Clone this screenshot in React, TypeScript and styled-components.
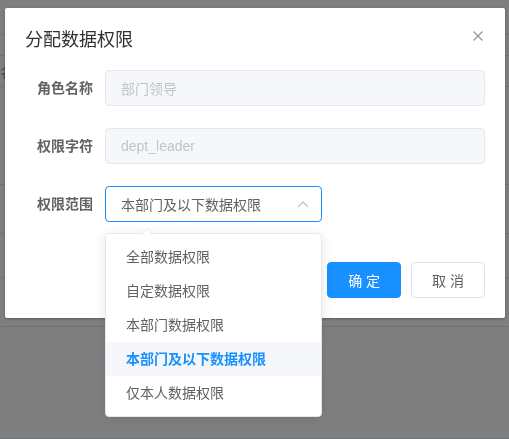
import { useState } from 'react';
import styled, { createGlobalStyle } from 'styled-components';

type ScopeOption = {
  value: string;
  label: string;
};

const SCOPE_OPTIONS: ScopeOption[] = [
  { value: '1', label: '全部数据权限' },
  { value: '2', label: '自定数据权限' },
  { value: '3', label: '本部门数据权限' },
  { value: '4', label: '本部门及以下数据权限' },
  { value: '5', label: '仅本人数据权限' },
];

// 背景列表的行高（被遮罩盖住的角色表格）
const TABLE_ROWS = [35, 21, 31, 98, 49, 44, 49, 112];

const GlobalStyle = createGlobalStyle`
  html, body {
    margin: 0;
    padding: 0;
    background: #fff;
  }
  body {
    font-family: "Helvetica Neue", "Liberation Sans", "Noto Sans CJK SC", sans-serif;
    -webkit-font-smoothing: antialiased;
  }
`;

const App = () => {
  const [scope, setScope] = useState('4');
  const current = SCOPE_OPTIONS.find(option => option.value === scope);

  return (
    <>
      <GlobalStyle />
      <PageTable>
        {TABLE_ROWS.map((height, index) => (
          <TableRow key={index} $height={height}>
            {index === 2 && <CellText>名称</CellText>}
          </TableRow>
        ))}
      </PageTable>

      <Mask>
        <Dialog>
          <DialogHeader>
            <DialogTitle>分配数据权限</DialogTitle>
            <CloseButton aria-label="关闭">
              <svg width="10" height="10" viewBox="0 0 10 10">
                <path
                  d="M0.5 0.5 L9.5 9.5 M9.5 0.5 L0.5 9.5"
                  stroke="#909399"
                  strokeWidth="1.2"
                  fill="none"
                />
              </svg>
            </CloseButton>
          </DialogHeader>

          <Form>
            <FormItem>
              <FormLabel>角色名称</FormLabel>
              <Input disabled value="部门领导" readOnly />
            </FormItem>
            <FormItem>
              <FormLabel>权限字符</FormLabel>
              <Input disabled value="dept_leader" readOnly />
            </FormItem>
            <FormItem>
              <FormLabel>权限范围</FormLabel>
              <SelectBox>
                <SelectInput>
                  <span>{current?.label}</span>
                  <svg width="12" height="8" viewBox="0 0 12 8">
                    <path
                      d="M1 7 L6 2 L11 7"
                      stroke="#c0c4cc"
                      strokeWidth="1.4"
                      fill="none"
                    />
                  </svg>
                </SelectInput>
                <Dropdown>
                  <DropdownArrow />
                  <OptionList>
                    {SCOPE_OPTIONS.map(option => (
                      <OptionItem
                        key={option.value}
                        $selected={option.value === scope}
                        onClick={() => setScope(option.value)}
                      >
                        {option.label}
                      </OptionItem>
                    ))}
                  </OptionList>
                </Dropdown>
              </SelectBox>
            </FormItem>
          </Form>

          <DialogFooter>
            <Button $primary>确 定</Button>
            <Button>取 消</Button>
          </DialogFooter>
        </Dialog>
      </Mask>
    </>
  );
};

export default App;

const PageTable = styled.div`
  display: flex;
  flex-direction: column;
  width: 100%;
`;

const TableRow = styled.div<{ $height: number }>`
  height: ${props => props.$height}px;
  box-sizing: border-box;
  border-bottom: 1px solid #dfe6ec;
  display: flex;
  align-items: center;
`;

const CellText = styled.span`
  font-size: 14px;
  color: #909399;
`;

const Mask = styled.div`
  position: fixed;
  inset: 0;
  background: rgba(0, 0, 0, 0.5);
  padding: 8px 0 0 5px;
`;

const Dialog = styled.div`
  width: 500px;
  background: #fff;
  border-radius: 2px;
  box-shadow: 0 1px 3px rgba(0, 0, 0, 0.3);
  box-sizing: border-box;
`;

const DialogHeader = styled.div`
  display: flex;
  align-items: center;
  justify-content: space-between;
  padding: 20px 22px 0 20px;
`;

const DialogTitle = styled.span`
  font-size: 18px;
  line-height: 24px;
  color: #303133;
`;

const CloseButton = styled.button`
  border: none;
  background: transparent;
  padding: 0;
  display: flex;
  cursor: pointer;
  margin-top: -8px;
`;

const Form = styled.div`
  display: flex;
  flex-direction: column;
  gap: 22px;
  padding: 18px 20px 22px 20px;
`;

const FormItem = styled.div`
  display: flex;
  align-items: center;
`;

const FormLabel = styled.label`
  width: 80px;
  flex-shrink: 0;
  box-sizing: border-box;
  padding-right: 12px;
  text-align: right;
  font-size: 14px;
  font-weight: 700;
  color: #606266;
  line-height: 36px;
`;

const Input = styled.input`
  flex: 1;
  height: 36px;
  box-sizing: border-box;
  padding: 0 15px;
  border: 1px solid #e4e7ed;
  border-radius: 4px;
  background: #f5f7fa;
  color: #c0c4cc;
  font-size: 14px;
  font-family: inherit;
  outline: none;
`;

const SelectBox = styled.div`
  position: relative;
  width: 217px;
`;

const SelectInput = styled.div`
  height: 36px;
  box-sizing: border-box;
  display: flex;
  align-items: center;
  justify-content: space-between;
  padding: 0 12px 0 15px;
  border: 1px solid #1890ff;
  border-radius: 4px;
  font-size: 14px;
  color: #606266;
  cursor: pointer;
`;

const Dropdown = styled.div`
  position: absolute;
  top: calc(100% + 11px);
  left: 0;
  width: 100%;
  z-index: 10;
  background: #fff;
  border: 1px solid #e4e7ed;
  border-radius: 4px;
  box-shadow: 0 2px 12px rgba(0, 0, 0, 0.1);
  box-sizing: border-box;
`;

const DropdownArrow = styled.div`
  position: absolute;
  top: -6px;
  left: 35px;
  width: 0;
  height: 0;
  border-left: 6px solid transparent;
  border-right: 6px solid transparent;
  border-bottom: 6px solid #e4e7ed;

  &::after {
    content: '';
    position: absolute;
    top: 1px;
    left: -6px;
    border-left: 6px solid transparent;
    border-right: 6px solid transparent;
    border-bottom: 6px solid #fff;
  }
`;

const OptionList = styled.ul`
  list-style: none;
  margin: 0;
  padding: 6px 0;
`;

const OptionItem = styled.li<{ $selected?: boolean }>`
  height: 34px;
  line-height: 34px;
  padding: 0 20px;
  font-size: 14px;
  color: ${props => (props.$selected ? '#1890ff' : '#606266')};
  font-weight: ${props => (props.$selected ? 700 : 400)};
  background: ${props => (props.$selected ? '#f5f7fa' : 'transparent')};
  cursor: pointer;
  white-space: nowrap;
`;

const DialogFooter = styled.div`
  display: flex;
  justify-content: flex-end;
  gap: 10px;
  padding: 18px 20px 20px;
`;

const Button = styled.button<{ $primary?: boolean }>`
  height: 36px;
  padding: 0 20px;
  box-sizing: border-box;
  border-radius: 4px;
  border: 1px solid ${props => (props.$primary ? '#1890ff' : '#dcdfe6')};
  background: ${props => (props.$primary ? '#1890ff' : '#fff')};
  color: ${props => (props.$primary ? '#fff' : '#606266')};
  font-size: 14px;
  font-family: inherit;
  cursor: pointer;
`;
